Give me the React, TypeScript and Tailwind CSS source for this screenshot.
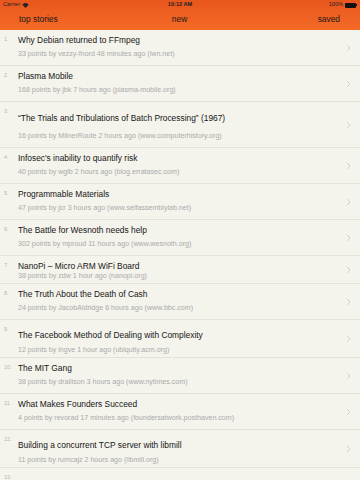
import type { ReactNode } from "react";

type Kind = "normal" | "tall" | "mid" | "compact";

type Story = {
  title: string;
  meta: string;
  kind: Kind;
};

const stories: Story[] = [
  { title: "Why Debian returned to FFmpeg", meta: "33 points by vezzy-fnord 48 minutes ago (lwn.net)", kind: "normal" },
  { title: "Plasma Mobile", meta: "168 points by jbk 7 hours ago (plasma-mobile.org)", kind: "normal" },
  {
    title: "\u201CThe Trials and Tribulations of Batch Processing\u201D (1967)",
    meta: "16 points by MilnerRoute 2 hours ago (www.computerhistory.org)",
    kind: "tall",
  },
  { title: "Infosec's inability to quantify risk", meta: "40 points by wglb 2 hours ago (blog.erratasec.com)", kind: "normal" },
  { title: "Programmable Materials", meta: "47 points by jcr 3 hours ago (www.selfassemblylab.net)", kind: "normal" },
  { title: "The Battle for Wesnoth needs help", meta: "302 points by mproud 11 hours ago (www.wesnoth.org)", kind: "normal" },
  { title: "NanoPi \u2013 Micro ARM WiFi Board", meta: "38 points by zdw 1 hour ago (nanopi.org)", kind: "compact" },
  { title: "The Truth About the Death of Cash", meta: "24 points by JacobAldridge 6 hours ago (www.bbc.com)", kind: "normal" },
  {
    title: "The Facebook Method of Dealing with Complexity",
    meta: "12 points by ingve 1 hour ago (ubiquity.acm.org)",
    kind: "mid",
  },
  { title: "The MIT Gang", meta: "38 points by drallison 3 hours ago (www.nytimes.com)", kind: "normal" },
  {
    title: "What Makes Founders Succeed",
    meta: "4 points by revorad 17 minutes ago (foundersatwork.posthaven.com)",
    kind: "normal",
  },
  {
    title: "Building a concurrent TCP server with libmill",
    meta: "11 points by rumcajz 2 hours ago (libmill.org)",
    kind: "mid",
  },
  { title: "", meta: "", kind: "normal" },
];

const rowHeight: Record<Kind, string> = {
  normal: "h-[36px]",
  tall: "h-[46px]",
  mid: "h-[38px]",
  compact: "h-[28px]",
};

const bodyPad: Record<Kind, string> = {
  normal: "pt-[5px]",
  tall: "pt-[11px]",
  mid: "pt-[10px]",
  compact: "pt-[5px]",
};

const metaGap: Record<Kind, string> = {
  normal: "mt-[5px]",
  tall: "mt-[9px]",
  mid: "mt-[6px]",
  compact: "mt-px",
};

function Chevron() {
  return (
    <svg width="5" height="8" viewBox="0 0 5 8" fill="none" className="shrink-0">
      <path d="M1 1 L4 4 L1 7" stroke="#d2d1cb" strokeWidth="1" />
    </svg>
  );
}

function StatusBar() {
  return (
    <div className="flex h-[10px] items-center justify-between px-[3px] text-[5.6px] leading-none text-[#222]">
      <div className="flex w-[60px] items-center gap-[2px]">
        <span>Carrier</span>
        <svg width="7" height="5" viewBox="0 0 14 10">
          <path d="M7 10 L0.5 3.2 A9.5 9.5 0 0 1 13.5 3.2 Z" fill="#222" />
        </svg>
      </div>
      <span className="font-semibold">10:12 AM</span>
      <div className="flex w-[60px] items-center justify-end gap-[2px]">
        <span>100%</span>
        <div className="flex items-center">
          <div className="h-[5px] w-[11px] rounded-[1px] bg-[#111]" />
          <div className="h-[2px] w-px bg-[#111]" />
        </div>
      </div>
    </div>
  );
}

function Tab({ children, className }: { children: ReactNode; className: string }) {
  return <span className={"text-[8.4px] leading-none text-[#1a1a1a] " + className}>{children}</span>;
}

function StoryRow({ story, index }: { story: Story; index: number }) {
  return (
    <div className={"flex shrink-0 border-b border-[#e4e3da] " + rowHeight[story.kind]}>
      <div className="w-[18px] shrink-0 pl-[4px] pt-[6px] text-[5.6px] leading-[7px] text-[#b9b8b2]">{index + 1}.</div>
      <div className={"flex min-w-0 flex-1 flex-col " + bodyPad[story.kind]}>
        {story.title && (
          <>
            <div className="truncate text-[8.4px] leading-[10px] text-[#161616]">{story.title}</div>
            <div className={"truncate text-[7.1px] leading-[8px] text-[#ababab] " + metaGap[story.kind]}>
              {story.meta}
            </div>
          </>
        )}
      </div>
      <div className="flex w-[24px] shrink-0 items-center justify-center">
        <Chevron />
      </div>
    </div>
  );
}

export default function App() {
  return (
    <div
      className="h-[480px] w-[360px] overflow-hidden bg-[#f4f3ec]"
      style={{ fontFamily: '"Liberation Sans", Arial, sans-serif' }}
    >
      <div className="bg-gradient-to-b from-[#e8561e] to-[#f46a26]">
        <StatusBar />
        <div className="flex h-[20px] items-center px-[19px] pb-px">
          <Tab className="flex-1">top stories</Tab>
          <Tab className="flex-1 text-center">new</Tab>
          <Tab className="flex-1 pr-px text-right">saved</Tab>
        </div>
      </div>
      <div className="flex flex-col">
        {stories.map((s, i) => (
          <StoryRow key={i} story={s} index={i} />
        ))}
      </div>
    </div>
  );
}
